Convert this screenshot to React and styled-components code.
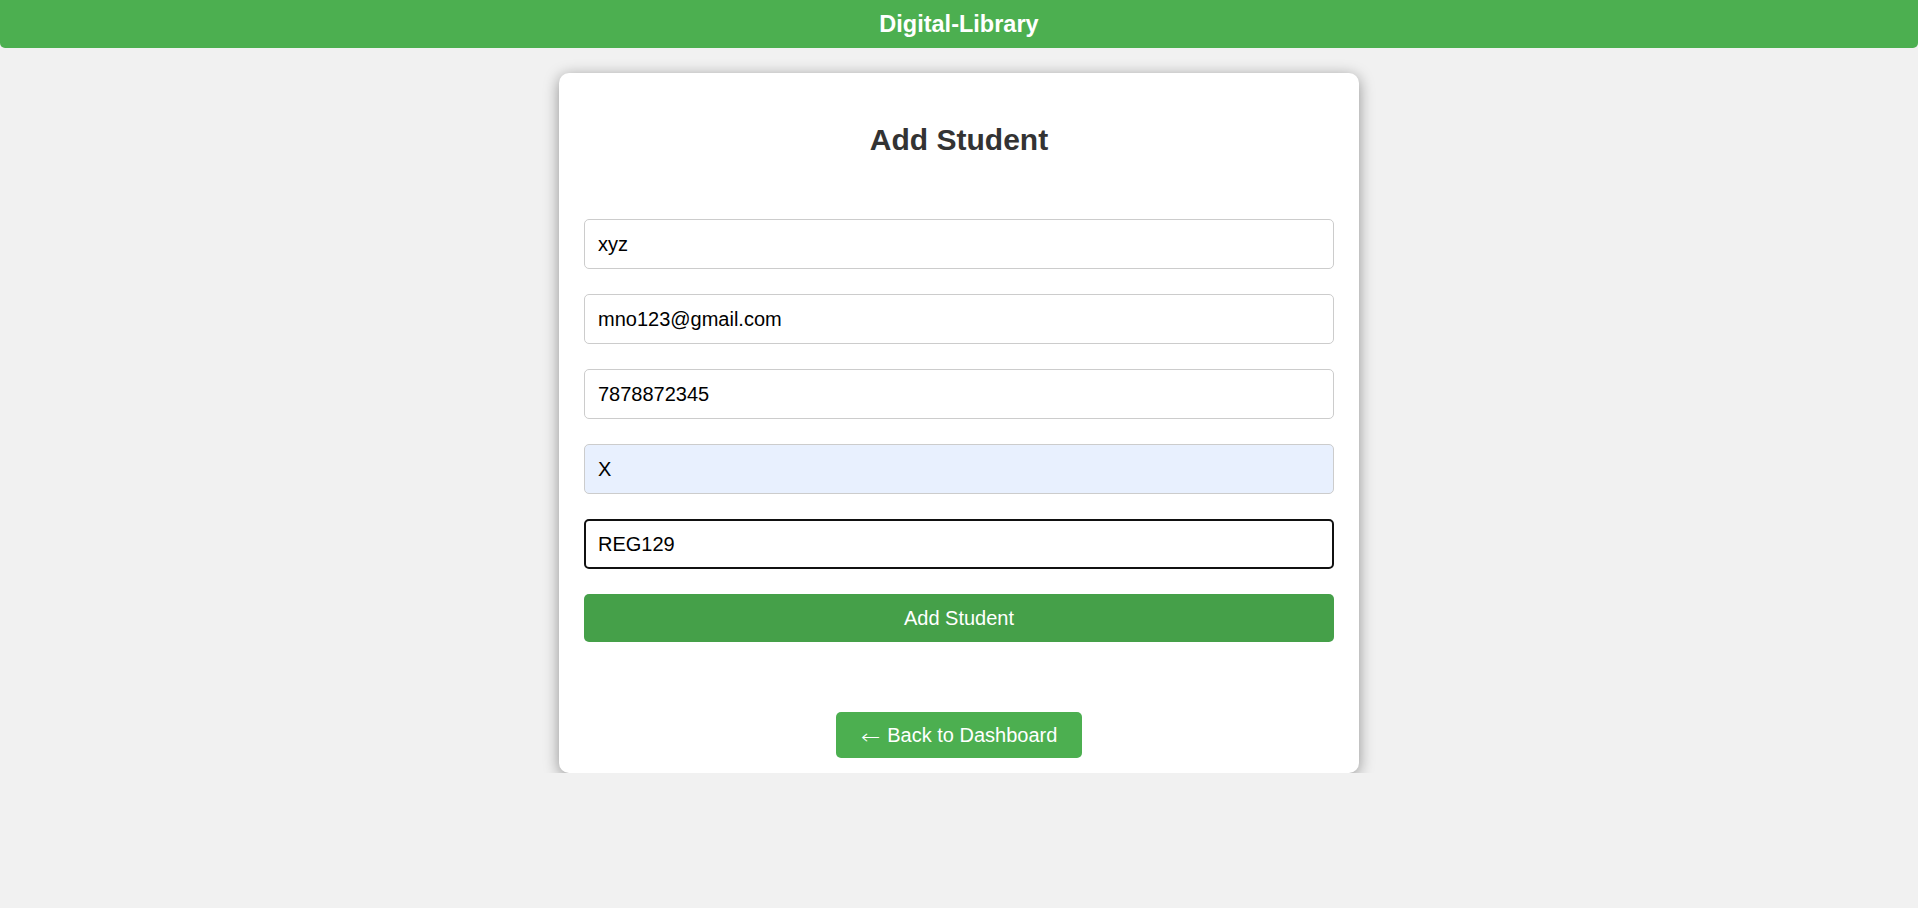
import React from 'react'
import styled, { createGlobalStyle } from 'styled-components'

const GlobalStyle = createGlobalStyle`
  body {
    margin: 0;
    background-color: #f1f1f1;
    font-family: "Liberation Sans", Arial, sans-serif;
  }
`;

const App = () => {
  return (
    <>
      <GlobalStyle />
      <Header>Digital-Library</Header>
      <Page>
        <Card>
          <Title>Add Student</Title>
          <Form onSubmit={(e) => e.preventDefault()}>
            <Input type="text" defaultValue="xyz" />
            <Input type="email" defaultValue="mno123@gmail.com" />
            <Input type="text" defaultValue="7878872345" />
            <Input type="text" defaultValue="X" autofilled />
            <Input type="text" defaultValue="REG129" focused />
            <SubmitButton type="submit">Add Student</SubmitButton>
          </Form>
          <BackButton href="#">
            <Arrow>←</Arrow> Back to Dashboard
          </BackButton>
        </Card>
      </Page>
    </>
  )
}

export default App;

const Header = styled.header`
  height: 48px;
  display: flex;
  align-items: center;
  justify-content: center;
  background-color: #4caf50;
  color: #fff;
  font-size: 23.5px;
  font-weight: bold;
  border-radius: 0 0 5px 5px;
`;

const Page = styled.main`
  display: flex;
  justify-content: center;
  padding-top: 25px;
`;

const Card = styled.div`
  width: 800px;
  height: 700px;
  box-sizing: border-box;
  padding: 50px 25px 0;
  background-color: #fff;
  border-radius: 10px;
  box-shadow: 0 3px 15px rgba(0, 0, 0, 0.4);
  display: flex;
  flex-direction: column;
  align-items: center;
`;

const Title = styled.h2`
  margin: 0 0 62px;
  font-size: 30px;
  line-height: 34px;
  font-weight: bold;
  color: #333;
`;

const Form = styled.form`
  width: 100%;
  display: flex;
  flex-direction: column;
  gap: 25px;
`;

const Input = styled.input`
  height: 50px;
  box-sizing: border-box;
  padding: 0 13px;
  font-family: "Liberation Sans", Arial, sans-serif;
  font-size: 20px;
  color: #000;
  border: 1px solid #ccc;
  border-radius: 5px;
  outline: none;
  background-color: ${({ autofilled }) => (autofilled ? '#e8f0fe' : '#fff')};
  ${({ focused }) => focused && `
    border: 2px solid #111;
    padding: 0 12px;
  `}
`;

const SubmitButton = styled.button`
  height: 48px;
  border: none;
  border-radius: 5px;
  background-color: #45a049;
  color: #fff;
  font-family: "Liberation Sans", Arial, sans-serif;
  font-size: 20px;
  cursor: pointer;
`;

const BackButton = styled.a`
  margin-top: 70px;
  height: 46px;
  box-sizing: border-box;
  padding: 0 25px;
  display: flex;
  align-items: center;
  white-space: pre;
  background-color: #4caf50;
  color: #fff;
  font-size: 20px;
  text-decoration: none;
  border-radius: 5px;
`;

const Arrow = styled.span`
  display: inline-block;
  width: 21px;
  font-family: "DejaVu Sans", sans-serif;
  font-size: 20px;
  font-weight: 200;
  transform: scaleX(1.15) translateY(2px);
  transform-origin: left center;
`;
